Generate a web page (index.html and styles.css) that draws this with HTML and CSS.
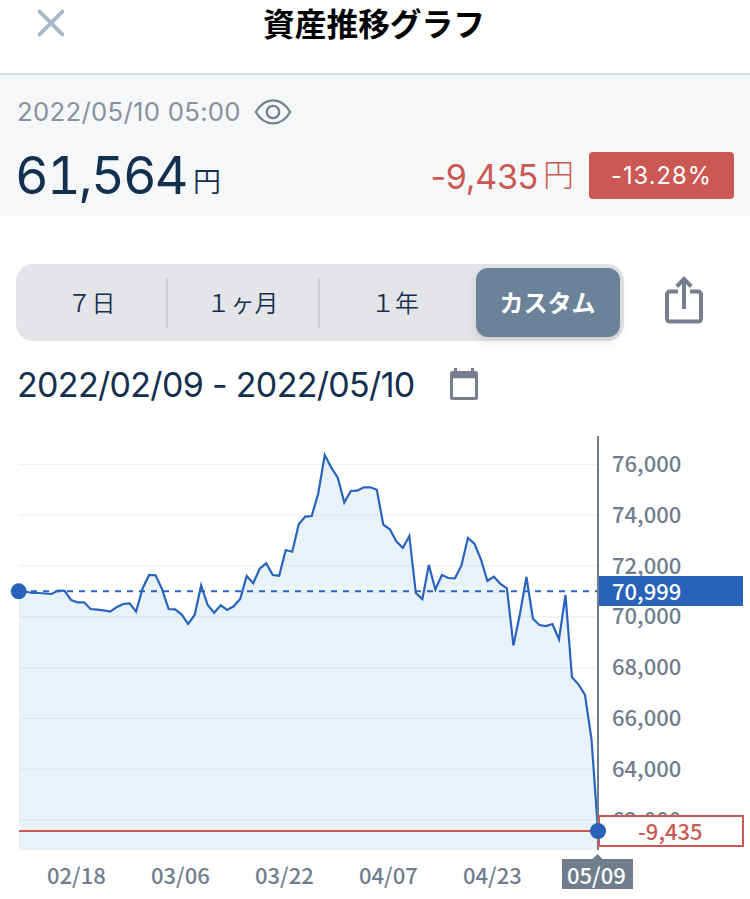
FILE: index.html
```html
<!DOCTYPE html>
<html lang="ja">
<head>
<meta charset="utf-8">
<title>資産推移グラフ</title>
<link rel="stylesheet" href="styles.css">
</head>
<body>
<header class="topbar">
  <svg class="close" width="30" height="30" viewBox="0 0 30 30"><path d="M3.6 3.6 26.4 26.4M26.4 3.6 3.6 26.4"/></svg>
  <h1 class="title">資産推移グラフ</h1>
</header>
<section class="summary">
  <div class="asof">
    <span class="asof-text">2022/05/10 05:00</span>
    <svg class="eye" width="38" height="28" viewBox="0 0 38 28"><path d="M1.800 14C5.500 7.500 11.200 2.300 19 2.300S32.500 7.500 36.200 14C32.500 20.500 26.800 25.300 19 25.300S5.500 20.500 1.800 14Z"/><circle cx="19" cy="14" r="6.200"/></svg>
  </div>
  <div class="figures">
    <div class="total"><span class="total-num">61,564</span><span class="total-unit">円</span></div>
    <div class="change"><span class="change-num">-9,435</span><span class="change-unit">円</span></div>
    <div class="badge">-13.28%</div>
  </div>
</section>
<main>
  <div class="controls">
    <div class="segments">
      <div class="seg">７日</div>
      <div class="seg">１ヶ月</div>
      <div class="seg">１年</div>
      <div class="seg active">カスタム</div>
    </div>
    <svg class="share" width="40" height="50" viewBox="0 0 40 50"><path d="M13 16.500H5a3 3 0 0 0-3 3V44a2.500 2.500 0 0 0 2.500 2.500H33.500a2.500 2.500 0 0 0 2.500-2.500V19.500a3 3 0 0 0-3-3H25M19 34V5M11.800 11.500 19 4 26.200 11.500"/></svg>
  </div>
  <div class="range">
    <span class="range-text">2022/02/09 - 2022/05/10</span>
    <svg class="calendar" width="28" height="33" viewBox="0 0 28 33"><path d="M4 0H7V3H21V0H24V3H25.500Q28 3 28 5.500V29.500Q28 32 25.500 32H2.500Q0 32 0 29.500V5.500Q0 3 2.500 3H4ZM3 10.300V29H25V10.300Z" fill-rule="evenodd"/></svg>
  </div>
  <svg class="chart" width="750" height="473" viewBox="0 426 750 473">
    <path id="area" class="area"/>
    <g id="grid"></g>
    <path class="base" d="M19 591.300H598"/>
    <path id="line" class="line"/>
    <path class="cursor" d="M598 436V850"/>
    <path class="loss" d="M19 831H598"/>
    <g id="ylabels"></g>
    <rect class="blue" x="599" y="576" width="144" height="30"/>
    <text class="tick white" x="612" y="600">70,999</text>
    <rect class="lossbox" x="599" y="816" width="144" height="30"/>
    <text class="tick red" x="638" y="840">-9,435</text>
    <circle class="blue" cx="18.700" cy="591.300" r="8"/>
    <circle class="blue" cx="598" cy="831" r="8"/>
    <g id="xlabels"></g>
    <path class="slate" d="M562 859H592.500L597.500 854L602.500 859H633V889H562Z"/>
    <text class="tick white" x="567" y="884">05/09</text>
  </svg>
</main>
<script src="chart.js"></script>
</body>
</html>
```
FILE: styles.css
```css
* { box-sizing: border-box; }
body { margin: 0; width: 750px; height: 899px; overflow: hidden; background: #fff; font-family: Inter, "Noto Sans CJK JP", sans-serif; color: #14304f; }
svg { display: block; flex: none; }
.topbar { height: 75px; border-bottom: 2px solid #d5d9e0; display: grid; grid-template-columns: 86px 1fr 88px; align-items: start; }
.close { margin: 8px 0 0 36px; fill: none; stroke: #a8b8c6; stroke-width: 3.8; stroke-linecap: round; }
.title { margin: -1px 0 0; text-align: center; font: 700 31.7px/46px "Noto Sans CJK JP", sans-serif; color: #000; white-space: nowrap; }
.summary { height: 141px; background: #f5f7f9; padding: 20px 16px 0 17px; }
.asof { display: flex; align-items: center; height: 34px; }
.asof-text { width: 237px; font-size: 25.7px; line-height: 34px; letter-spacing: 0.3px; color: #8592a1; white-space: nowrap; }
.eye { fill: none; stroke: #767e90; stroke-width: 2.3; }
.figures { display: flex; height: 47px; margin-top: 23px; align-items: center; white-space: nowrap; }
.total, .change { display: flex; align-items: baseline; line-height: 47px; }
.total { flex: 1; padding-top: 7px; margin-left: -2px; }
.total-num { width: 174px; font-size: 52px; letter-spacing: -1.8px; font-variant-numeric: tabular-nums; }
.total-unit { font: 350 28px/47px "Noto Sans CJK JP", sans-serif; margin-left: 4px; position: relative; top: -2px; }
.change { color: #ca5853; margin-right: 15px; }
.change-num { font-size: 34px; letter-spacing: -0.3px; }
.change-unit { font: 300 31px/47px "Noto Sans CJK JP", sans-serif; margin-left: 5px; position: relative; top: -3px; }
.badge { width: 145px; height: 47px; border-radius: 4px; background: #cc5853; color: #fff; font-size: 23.7px; line-height: 47px; letter-spacing: 1px; text-align: center; }
.controls { display: flex; margin: 48px 16px 0; }
.segments { width: 608px; height: 77px; border-radius: 17px; background: #e4e5e9; padding: 4px; display: grid; grid-template-columns: 148px 152px 156px 144px; align-items: center; }
.seg { font: 350 24px/48px "Noto Sans CJK JP", sans-serif; text-align: center; height: 50px; padding-right: 3px; border-right: 2px solid #cfd1d4; white-space: nowrap; }
.seg:nth-child(2) { padding-right: 1px; }
.seg:nth-child(3) { border: 0; padding-right: 6px; }
.seg.active { border: 0; padding: 0 1px 0 0; height: 69px; line-height: 67px; border-radius: 12px; background: #6b8299; color: #fff; font-weight: 700; box-shadow: 0 3px 10px rgba(0, 0, 0, .13); }
.share { margin: 11px 0 0 41px; fill: none; stroke: #767e90; stroke-width: 4; }
.range { height: 85px; padding: 2px 17px 0; display: flex; align-items: center; }
.range-text { width: 433px; font-size: 34px; white-space: nowrap; letter-spacing: -0.68px; }
.calendar { fill: #767e90; }
.area { fill: #eaf2f9; }
.grid { fill: none; stroke: rgba(80, 90, 100, .08); stroke-width: 1.3; }
.base { fill: none; stroke: #2864b7; stroke-width: 2; stroke-dasharray: 6; }
.line { fill: none; stroke: #2864bb; stroke-width: 2.2; stroke-linejoin: miter; }
.cursor { stroke: #707d8d; stroke-width: 2; }
.loss { stroke: #ca5853; stroke-width: 2; }
.blue { fill: #2862b9; }
.slate { fill: #707d8d; }
.lossbox { fill: #fff; stroke: #ca5853; stroke-width: 2; }
.tick { font: 500 22px "Noto Sans CJK JP", sans-serif; fill: #707d8d; }
.white { fill: #fff; }
.red { fill: #ca5853; }
```
FILE: chart.js
```js
const values = [591, 591.5, 593, 593, 593.5, 594, 590.5, 590.8, 600, 602.3, 602.3, 609, 609.6, 610.3, 611.6, 607.3, 604, 603.3, 611.6, 588.5,
  575, 575.3, 589.3, 609, 609.3, 614.6, 623.8, 615, 585.5, 605, 612.8, 605.3, 610, 606.3, 599, 576, 583.3, 568.7, 563.3, 575,
  575.7, 550, 551.7, 524.3, 516.6, 516, 493.3, 455, 467.7, 477.7, 502.5, 491, 490.7, 487.3, 487.3, 489.7, 524.7, 529.3, 541.3, 548,
  536, 593, 599, 565, 589.5, 575, 578, 578.3, 565.7, 538, 543.7, 559.3, 581, 576.7, 584, 588.3, 645.5, 614, 577, 618.7,
  625, 626, 624, 639.5, 595, 677.3, 684.3, 695, 739, 831];
const points = values.map((y, i) => (19 + i * 579 / 89).toFixed(2) + ' ' + y).join('L');
document.getElementById('line').setAttribute('d', 'M' + points);
document.getElementById('area').setAttribute('d', 'M' + points + 'L598 850L19 850Z');

let grid = '';
let ticks = '';
for (let k = 0; k < 8; k++) {
  const y = 464.3 + k * 50.82;
  grid += `<path class="grid" d="M19 ${y}H598"/>`;
  ticks += `<text class="tick" x="612" y="${y + 7.7}">${76 - 2 * k},000</text>`;
}
document.getElementById('grid').innerHTML = grid;
document.getElementById('ylabels').innerHTML = ticks;
document.getElementById('xlabels').innerHTML = ['02/18', '03/06', '03/22', '04/07', '04/23']
  .map((d, i) => `<text class="tick" x="${47 + i * 104}" y="884">${d}</text>`).join('');
```
